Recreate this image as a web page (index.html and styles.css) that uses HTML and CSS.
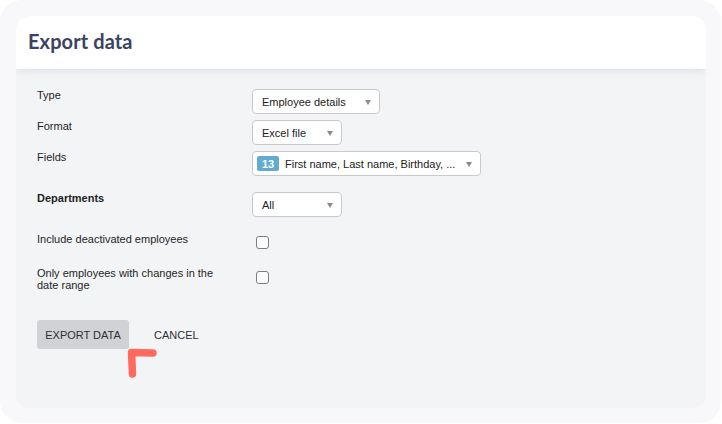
FILE: index.html
```html
<!DOCTYPE html>
<html lang="en">
<head>
<meta charset="utf-8">
<title>Export data</title>
<link rel="stylesheet" href="styles.css">
</head>
<body>
<div class="frame">
  <div class="card">
    <header class="card-header">
      <h1 class="title">Export data</h1>
    </header>
    <div class="card-body">
      <div class="row row-type">
        <div class="label">Type</div>
        <div class="control">
          <div class="select w-type"><span class="select-text">Employee details</span><span class="caret"></span></div>
        </div>
      </div>
      <div class="row row-format">
        <div class="label">Format</div>
        <div class="control">
          <div class="select w-short"><span class="select-text">Excel file</span><span class="caret"></span></div>
        </div>
      </div>
      <div class="row row-fields">
        <div class="label">Fields</div>
        <div class="control">
          <div class="select w-fields"><span class="badge">13</span><span class="select-text">First name, Last name, Birthday, ...</span><span class="caret"></span></div>
        </div>
      </div>
      <div class="row row-dept">
        <div class="label label-bold">Departments</div>
        <div class="control">
          <div class="select w-short"><span class="select-text">All</span><span class="caret"></span></div>
        </div>
      </div>
      <div class="row row-check1">
        <div class="label">Include deactivated employees</div>
        <div class="control">
          <span class="checkbox"></span>
        </div>
      </div>
      <div class="row row-check2">
        <div class="label">Only employees with changes in the date range</div>
        <div class="control">
          <span class="checkbox"></span>
        </div>
      </div>
      <div class="actions">
        <button class="btn btn-primary" type="button">Export data</button>
        <button class="btn btn-link" type="button">Cancel</button>
      </div>
    </div>
    <svg class="annotation" width="40" height="40" viewBox="0 0 40 40" aria-hidden="true">
      <path d="M8.5 33 L7.5 11.5 L29 12" fill="none" stroke="#ff6a5f" stroke-width="7.5" stroke-linecap="round" stroke-linejoin="round"/>
    </svg>
  </div>
</div>
</body>
</html>
```

FILE: styles.css
```css
* {
  box-sizing: border-box;
}

html, body {
  margin: 0;
  padding: 0;
  background: #ffffff;
}

body {
  font-family: "Liberation Sans", Arial, Helvetica, sans-serif;
  font-size: 11px;
  color: #1f1f1f;
}

.frame {
  width: 721px;
  height: 423px;
  background: #f8f8fa;
  border-radius: 22px;
  padding: 16px 15px 15px 16px;
}

.card {
  position: relative;
  width: 690px;
  height: 392px;
  background: #f3f4f6;
  border-radius: 13px;
  overflow: hidden;
  display: flex;
  flex-direction: column;
}

.card-header {
  height: 53px;
  background: #ffffff;
  display: flex;
  align-items: center;
  padding: 0 12px 3px;
  box-shadow: 0 1px 9px rgba(40, 55, 85, 0.13);
  position: relative;
  z-index: 1;
}

.title {
  margin: 0;
  font-family: Lato, "Open Sans", sans-serif;
  font-weight: 700;
  font-size: 20px;
  color: #3b4262;
  letter-spacing: 0.1px;
}

.card-body {
  padding: 20px 21px 0 21px;
  display: flex;
  flex-direction: column;
}

.row {
  display: flex;
  align-items: flex-start;
}

.row-format,
.row-fields {
  margin-top: 6px;
}

.row-dept {
  margin-top: 16px;
}

.row-check1 {
  margin-top: 16px;
}

.row-check2 {
  margin-top: 18px;
}

.label {
  width: 215px;
  flex: none;
  padding-right: 25px;
  line-height: 12px;
  color: #1f1f1f;
}

.label-bold {
  font-weight: 700;
}

.control {
  display: flex;
  align-items: flex-start;
}

.select {
  height: 25px;
  background: #ffffff;
  border: 1px solid #c9c9cc;
  border-radius: 4px;
  display: flex;
  align-items: center;
  padding: 0 0 0 9px;
  position: relative;
  color: #222222;
}

.select-text {
  white-space: nowrap;
}

.w-type {
  width: 128px;
}

.w-short {
  width: 90px;
}

.w-fields {
  width: 229px;
  padding-left: 4px;
}

.caret {
  position: absolute;
  right: 8px;
  top: 10px;
  width: 0;
  height: 0;
  border-left: 3.5px solid transparent;
  border-right: 3.5px solid transparent;
  border-top: 5px solid #8a8a8a;
}

.badge {
  width: 22px;
  height: 15px;
  border-radius: 2px;
  background: #62acd1;
  color: #ffffff;
  font-weight: 700;
  font-size: 11px;
  display: flex;
  align-items: center;
  justify-content: center;
  margin-right: 6px;
}

.checkbox {
  display: block;
  width: 13px;
  height: 13px;
  margin: 3px 0 0 4px;
  background: #ffffff;
  border: 1px solid #7d7d80;
  border-radius: 3px;
}

.row-check2 .checkbox {
  margin-top: 4px;
}

.actions {
  margin-top: 29px;
  display: flex;
  align-items: center;
  gap: 15px;
}

.btn {
  font-family: "Liberation Sans", Arial, Helvetica, sans-serif;
  font-size: 11px;
  text-transform: uppercase;
  white-space: nowrap;
  color: #2f2f33;
  height: 29px;
  border: none;
  border-radius: 3px;
  padding: 0 10px;
  margin: 0;
  cursor: pointer;
}

.btn-primary {
  width: 92px;
  padding: 0;
  background: #d1d2d6;
}

.btn-link {
  background: transparent;
}

.annotation {
  position: absolute;
  left: 108px;
  top: 325px;
}
```
